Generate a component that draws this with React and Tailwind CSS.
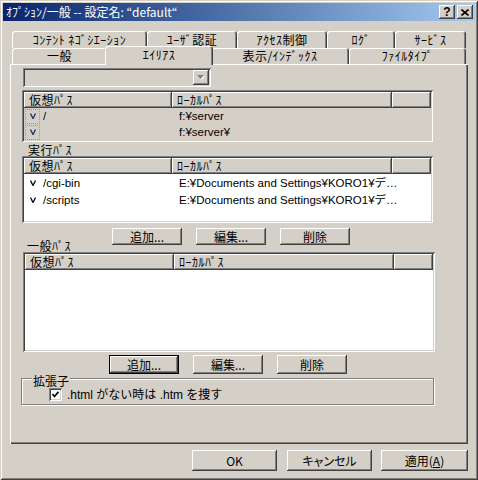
import React from 'react';

const raised = 'shadow-[inset_-1px_-1px_#404040,inset_1px_1px_#ffffff,inset_-2px_-2px_#808080]';
const sunken = 'shadow-[inset_1px_1px_#808080,inset_-1px_-1px_#ffffff,inset_2px_2px_#404040,inset_-2px_-2px_#d4d0c8]';
const tabEdge = 'shadow-[inset_1px_1px_#ffffff,inset_-1px_0_#404040,inset_-2px_0_#808080]';
const latin = "font-['Liberation_Sans','Noto_Sans_CJK_JP',sans-serif]";

function Btn({ className = '', isDefault, children }) {
    return (
        <div className={`flex items-center justify-center bg-[#d4d0c8] text-[12px] leading-[12px] text-black ${isDefault ? 'border border-black' : ''} ${raised} ${className}`}>
            {children}
        </div>
    );
}

function Tab({ className = '', active, children }) {
    return (
        <div className={`flex items-center justify-center rounded-t-[3px] bg-[#d4d0c8] text-[12px] leading-[12px] tracking-[0.5px] ${tabEdge} ${active ? 'relative z-10 -mx-[2px] -mt-[2px] h-[19px] pb-[2px]' : 'h-full'} ${className}`}>
            {children}
        </div>
    );
}

function Head({ className = '', children }) {
    return (
        <div className={`flex h-full items-center bg-[#d4d0c8] px-[5px] text-[12px] leading-[12px] tracking-[0.5px] ${raised} ${className}`}>
            {children}
        </div>
    );
}

function Vee({ color = '#000' }) {
    return (
        <svg width="6" height="6" viewBox="0 0 6 6">
            <path d="M0.5 0.5 L3 5.5 L5.5 0.5" fill="none" stroke={color} strokeWidth="1.3" />
        </svg>
    );
}

function ListHeader({ c1 = 'w-[148px]', c2 = 'w-[220px]' }) {
    return (
        <div className="flex h-[16px] shrink-0">
            <Head className={c1}>仮想ﾊﾟｽ</Head>
            <Head className={c2}>ﾛｰｶﾙﾊﾟｽ</Head>
            <Head className="flex-1" />
        </div>
    );
}

export default function App() {
    return (
        <div className={`flex h-[480px] w-[478px] flex-col bg-[#d4d0c8] p-[3px] font-['Noto_Sans_CJK_JP',sans-serif] text-black shadow-[inset_1px_1px_#d4d0c8,inset_-1px_-1px_#404040,inset_2px_2px_#ffffff,inset_-2px_-2px_#808080]`}>
            {/* title bar */}
            <div className="flex h-[18px] shrink-0 items-center bg-linear-to-r from-[#0a246a] to-[#a6caf0] pl-[3px] pr-[2px]">
                <span className="flex-1 text-[12px] leading-[12px] text-white">ｵﾌﾟｼｮﾝ/一般 -- 設定名: “default“</span>
                <div className="flex gap-[2px]">
                    <Btn className="h-[14px] w-[16px] font-bold font-['Liberation_Sans',sans-serif] text-[11px]">?</Btn>
                    <Btn className="h-[14px] w-[16px]">
                        <svg width="8" height="7" viewBox="0 0 8 7">
                            <path d="M0.5 0.5 L7.5 6.5 M7.5 0.5 L0.5 6.5" stroke="#000" strokeWidth="1.6" />
                        </svg>
                    </Btn>
                </div>
            </div>

            {/* tabs */}
            <div className="ml-[9px] mt-[10px] flex h-[17px] shrink-0">
                <Tab className="w-[135px]">ｺﾝﾃﾝﾄ ﾈｺﾞｼｴｰｼｮﾝ</Tab>
                <Tab className="w-[90px]">ﾕｰｻﾞ認証</Tab>
                <Tab className="w-[90px]">ｱｸｾｽ制御</Tab>
                <Tab className="w-[68px]">ﾛｸﾞ</Tab>
                <Tab className="w-[71px]">ｻｰﾋﾞｽ</Tab>
            </div>
            <div className="ml-[9px] flex h-[16px] shrink-0 items-start">
                <Tab className="w-[95px]">一般</Tab>
                <Tab className="w-[108px]" active>ｴｲﾘｱｽ</Tab>
                <Tab className="w-[138px]">表示/ｲﾝﾃﾞｯｸｽ</Tab>
                <Tab className="w-[117px]">ﾌｧｲﾙﾀｲﾌﾟ</Tab>
            </div>

            {/* panel */}
            <div className="ml-[7px] flex h-[380px] w-[458px] shrink-0 flex-col shadow-[inset_1px_1px_#ffffff,inset_-1px_-1px_#404040,inset_-2px_-2px_#808080]">
                {/* combo */}
                <div className={`ml-[13px] mt-[4px] flex h-[19px] w-[188px] items-center justify-end bg-[#d4d0c8] p-[2px] ${sunken}`}>
                    <Btn className="h-[15px] w-[16px]">
                        <svg width="8" height="5" viewBox="0 0 8 5">
                            <polygon points="1,1 8,1 4.5,5" fill="#ffffff" />
                            <polygon points="0,0 7,0 3.5,4" fill="#808080" />
                        </svg>
                    </Btn>
                </div>

                {/* list 1 */}
                <div className={`ml-[12px] mt-[3px] flex h-[52px] w-[411px] flex-col bg-[#d4d0c8] p-[2px] ${sunken}`}>
                    <ListHeader />
                    <div className={`flex h-[16px] items-center text-[11.5px] leading-[12px] ${latin}`}>
                        <div className="ml-[1px] flex h-[15px] w-[15px] items-center justify-center border border-dotted border-[#7a9ad6]">
                            <Vee color="#1c2f66" />
                        </div>
                        <span className="ml-[3px] w-[136px]">/</span>
                        <span>f:¥server</span>
                    </div>
                    <div className={`flex h-[16px] items-center text-[11.5px] leading-[12px] ${latin}`}>
                        <div className="ml-[1px] flex h-[15px] w-[15px] items-center justify-center border border-dotted border-[#7a9ad6]">
                            <Vee color="#1c2f66" />
                        </div>
                        <span className="ml-[3px] w-[136px]"></span>
                        <span>f:¥server¥</span>
                    </div>
                </div>

                <div className="ml-[18px] mt-[2px] h-[12px] text-[12px] leading-[12px] tracking-[0.5px]">実行ﾊﾟｽ</div>

                {/* list 2 */}
                <div className={`ml-[12px] flex h-[67px] w-[411px] flex-col bg-white p-[2px] ${sunken}`}>
                    <ListHeader />
                    {['/cgi-bin', '/scripts'].map((p) => (
                        <div key={p} className={`flex h-[17px] items-center text-[11.5px] leading-[12px] ${latin}`}>
                            <div className="ml-[1px] flex w-[15px] justify-center">
                                <Vee />
                            </div>
                            <span className="ml-[3px] w-[136px]">{p}</span>
                            <span>E:¥Documents and Settings¥KORO1¥デ…</span>
                        </div>
                    ))}
                </div>

                {/* buttons 1 + label */}
                <div className="mt-[5px] flex h-[24px] items-start">
                    <div className="ml-[17px] w-[85px] self-end text-[12px] leading-[12px] tracking-[0.5px]">一般ﾊﾟｽ</div>
                    <Btn className="h-[17px] w-[70px]">追加...</Btn>
                    <Btn className="ml-[14px] h-[17px] w-[70px]">編集...</Btn>
                    <Btn className="ml-[14px] h-[17px] w-[70px]">削除</Btn>
                </div>

                {/* list 3 */}
                <div className={`ml-[13px] flex h-[100px] w-[412px] flex-col bg-white p-[2px] ${sunken}`}>
                    <ListHeader c1="w-[149px]" />
                </div>

                {/* buttons 2 */}
                <div className="ml-[99px] mt-[3px] flex h-[19px]">
                    <Btn className="w-[70px]" isDefault>追加...</Btn>
                    <Btn className="ml-[14px] w-[70px]">編集...</Btn>
                    <Btn className="ml-[14px] w-[70px]">削除</Btn>
                </div>

                {/* group box */}
                <div className="ml-[11px] mt-[4px] flex h-[27px] w-[413px] flex-col border border-[#808080] shadow-[inset_1px_1px_#ffffff,1px_1px_#ffffff]">
                    <div className="-mt-[4px] ml-[10px] w-fit bg-[#d4d0c8] px-[1px] text-[12px] leading-[12px]">拡張子</div>
                    <div className="ml-[27px] mt-[1px] flex items-center">
                        <div className={`flex h-[13px] w-[13px] items-center justify-center bg-white ${sunken}`}>
                            <svg width="7" height="7" viewBox="0 0 7 7">
                                <path d="M0.5 3 L2.5 5.5 L6.5 0.8" fill="none" stroke="#000" strokeWidth="1.7" />
                            </svg>
                        </div>
                        <span className={`ml-[5px] text-[12px] leading-[12px] ${latin}`}>.html がない時は .htm を捜す</span>
                    </div>
                </div>
            </div>

            {/* bottom buttons */}
            <div className="ml-[189px] mt-[6px] flex h-[21px]">
                <Btn className="w-[85px]">OK</Btn>
                <Btn className="ml-[10px] w-[85px] [font-feature-settings:'palt']">キャンセル</Btn>
                <Btn className="ml-[9px] w-[87px]">
                    適用(<span className="underline">A</span>)
                </Btn>
            </div>
        </div>
    );
}
